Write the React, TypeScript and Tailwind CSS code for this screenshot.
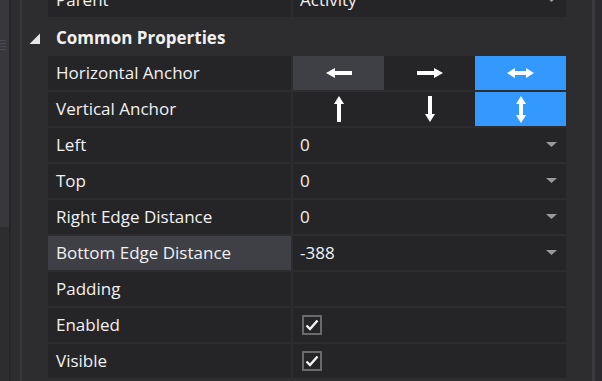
import { ReactNode } from "react";

const font = "font-['Open_Sans',sans-serif]";

function DropArrow() {
  return (
    <svg width="11" height="6" viewBox="0 0 11 6" className="mr-[9px] shrink-0">
      <polygon points="0,0 11,0 5.5,5" fill="#999999" />
    </svg>
  );
}

function ArrowLeft() {
  return (
    <svg width="26" height="10" viewBox="0 0 26 10">
      <polygon points="0,5 9,0 9,10" fill="#ffffff" />
      <rect x="8" y="3" width="18" height="4" fill="#ffffff" />
    </svg>
  );
}

function ArrowRight() {
  return (
    <svg width="26" height="10" viewBox="0 0 26 10">
      <polygon points="26,5 17,0 17,10" fill="#ffffff" />
      <rect x="0" y="3" width="18" height="4" fill="#ffffff" />
    </svg>
  );
}

function ArrowLeftRight() {
  return (
    <svg width="27" height="10" viewBox="0 0 27 10">
      <polygon points="0,5 8,0 8,10" fill="#ffffff" />
      <polygon points="27,5 19,0 19,10" fill="#ffffff" />
      <rect x="7" y="3" width="13" height="4" fill="#ffffff" />
    </svg>
  );
}

function ArrowUp() {
  return (
    <svg width="10" height="26" viewBox="0 0 10 26">
      <polygon points="5,0 10,8 0,8" fill="#ffffff" />
      <rect x="3" y="7" width="4" height="19" fill="#ffffff" />
    </svg>
  );
}

function ArrowDown() {
  return (
    <svg width="10" height="26" viewBox="0 0 10 26">
      <polygon points="5,26 10,18 0,18" fill="#ffffff" />
      <rect x="3" y="0" width="4" height="19" fill="#ffffff" />
    </svg>
  );
}

function ArrowUpDown() {
  return (
    <svg width="10" height="27" viewBox="0 0 10 27">
      <polygon points="5,0 10,8 0,8" fill="#ffffff" />
      <polygon points="5,27 10,19 0,19" fill="#ffffff" />
      <rect x="3" y="7" width="4" height="13" fill="#ffffff" />
    </svg>
  );
}

function Check() {
  return (
    <div className="ml-[9px] w-[20px] h-[20px] border-2 border-[#6a6a6e] bg-[#252527] flex items-center justify-center">
      <svg width="14" height="12" viewBox="0 0 14 12">
        <polyline points="1.5,6.5 5,10 12.5,1.5" fill="none" stroke="#f1f1f1" strokeWidth="2.4" />
      </svg>
    </div>
  );
}

function Row({
  label,
  children,
  highlight,
  className = "",
}: {
  label: string;
  children?: ReactNode;
  highlight?: boolean;
  className?: string;
}) {
  return (
    <div className={`flex h-[34px] gap-[2px] ml-[26px] shrink-0 ${className}`}>
      <div
        className={`w-[243px] flex items-center pl-[8px] text-[17px] text-[#f1f1f1] ${
          highlight ? "bg-[#3f3f46]" : "bg-[#252527]"
        }`}
      >
        {label}
      </div>
      <div className="flex-1 flex items-center bg-[#252527] text-[17px] text-[#f1f1f1]">
        {children}
      </div>
    </div>
  );
}

function Value({ text }: { text: string }) {
  return (
    <>
      <span className="pl-[7px] flex-1">{text}</span>
      <DropArrow />
    </>
  );
}

function Seg({ active, on, children }: { active?: boolean; on?: boolean; children: ReactNode }) {
  return (
    <div
      className={`flex-1 h-full flex items-center justify-center ${
        on ? "bg-[#3399ff]" : active ? "bg-[#3f3f46]" : "bg-[#252527]"
      }`}
    >
      {children}
    </div>
  );
}

export default function App() {
  return (
    <div className={`w-[602px] h-[381px] overflow-hidden flex bg-[#2d2d30] ${font}`}>
      {/* left splitter strip */}
      <div className="w-[22px] flex shrink-0">
        <div className="w-[9px] flex flex-col">
          <div className="h-[227px] bg-[#37373c] flex flex-col pt-[40px] gap-[2px]">
            <div className="h-[1px] w-[6px] bg-[#4a4a50]" />
            <div className="h-[1px] w-[6px] bg-[#4a4a50]" />
            <div className="h-[1px] w-[6px] bg-[#4a4a50]" />
            <div className="h-[1px] w-[6px] bg-[#4a4a50]" />
          </div>
        </div>
        <div className="w-[2px] bg-[#262629]" />
        <div className="w-[9px] bg-[#2d2d30]" />
        <div className="w-[2px] bg-[#37373c]" />
      </div>

      {/* property grid */}
      <div className="w-[544px] flex flex-col gap-[2px] shrink-0">
        <Row label="Parent" className="-mt-[17px]">
          <Value text="Activity" />
        </Row>

        <div className="h-[35px] shrink-0 flex items-center">
          <svg width="26" height="12" viewBox="0 0 26 12" className="shrink-0 mt-[4px]">
            <polygon points="18,0.5 18,11 7.5,11" fill="#e6e6e6" />
          </svg>
          <span className="pl-[8px] text-[17px] font-bold text-[#f1f1f1] mt-[2px]">
            Common Properties
          </span>
        </div>

        <Row label="Horizontal Anchor">
          <Seg active>
            <ArrowLeft />
          </Seg>
          <Seg>
            <ArrowRight />
          </Seg>
          <Seg on>
            <ArrowLeftRight />
          </Seg>
        </Row>
        <Row label="Vertical Anchor">
          <Seg>
            <ArrowUp />
          </Seg>
          <Seg>
            <ArrowDown />
          </Seg>
          <Seg on>
            <ArrowUpDown />
          </Seg>
        </Row>
        <Row label="Left">
          <Value text="0" />
        </Row>
        <Row label="Top">
          <Value text="0" />
        </Row>
        <Row label="Right Edge Distance">
          <Value text="0" />
        </Row>
        <Row label="Bottom Edge Distance" highlight>
          <Value text="-388" />
        </Row>
        <Row label="Padding" />
        <Row label="Enabled">
          <Check />
        </Row>
        <Row label="Visible">
          <Check />
        </Row>
      </div>

      {/* right edge */}
      <div className="w-[26px] bg-[#2d2d30] shrink-0" />
      <div className="w-[3px] bg-[#3a3a40] shrink-0" />
      <div className="flex-1 bg-[#2b2b2e]" />
    </div>
  );
}
